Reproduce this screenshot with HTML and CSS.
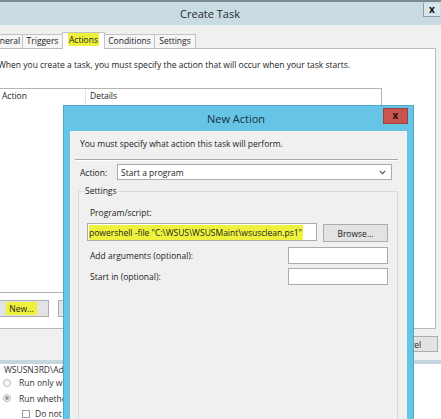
FILE: index.html
```html
<!DOCTYPE html>
<html>
<head>
<meta charset="utf-8">
<title>New Action</title>
<link rel="stylesheet" href="styles.css">
</head>
<body>
<div class="screen">
  <div class="ct">
    <div class="ct-title"><span></span><span class="ct-name">Create Task</span><span class="ct-close">x</span></div>
    <div class="ct-body">
      <div class="tabs">
        <span class="tab t-general">General</span>
        <span class="tab t-triggers">Triggers</span>
        <span class="tab t-actions tab-on"><span class="hl">Actions</span></span>
        <span class="tab t-cond">Conditions</span>
        <span class="tab t-set">Settings</span>
      </div>
      <div class="page">
        <p class="intro">When you create a task, you must specify the action that will occur when your task starts.</p>
        <div class="list">
          <div class="list-head"><span class="col col-action">Action</span><span class="col col-details">Details</span></div>
        </div>
        <div class="list-btns"><span class="btn btn-new"><span class="hl">New...</span></span><span class="btn btn-edit">Edit...</span></div>
      </div>
      <div class="ct-foot"><span class="btn btn-ok">OK</span><span class="btn btn-cancel">Cancel</span></div>
    </div>
  </div>
  <div class="gen">
    <div class="gen-user">WSUSN3RD\Administrator</div>
    <div class="opt"><span class="radio"></span>Run only when user is logged on</div>
    <div class="opt"><span class="radio on"></span>Run whether user is logged on or not</div>
    <div class="opt sub"><span class="check"></span>Do not store password</div>
  </div>

  <div class="dlg">
    <div class="dlg-title"><span></span><span class="dlg-name">New Action</span><span class="dlg-close">x</span></div>
    <div class="dlg-body">
      <p class="dlg-msg">You must specify what action this task will perform.</p>
      <div class="sep"></div>
      <div class="act-row">
        <span class="act-label">Action:</span>
        <div class="select"><span>Start a program</span>
          <svg class="chev" width="7" height="5" viewBox="0 0 7 5"><path d="M0.8 0.8 L3.5 3.6 L6.2 0.8" fill="none" stroke="#505050" stroke-width="1.1"/></svg>
        </div>
      </div>
      <fieldset class="group">
        <legend>Settings</legend>
        <div class="lbl">Program/script:</div>
        <div class="prog-row">
          <div class="input prog"><span class="hl hl-prog">powershell -file "C:\WSUS\WSUSMaint\wsusclean.ps1"</span></div>
          <span class="btn browse">Browse...</span>
        </div>
        <div class="arg-row a1"><span class="arg-label">Add arguments (optional):</span><div class="input small"></div></div>
        <div class="arg-row a2"><span class="arg-label">Start in (optional):</span><div class="input small"></div></div>
      </fieldset>
    </div>
  </div>
</div>
</body>
</html>
```

FILE: styles.css
```css
* { box-sizing: border-box; }
html, body { margin: 0; padding: 0; }
body {
  width: 441px;
  height: 419px;
  overflow: hidden;
  background: #ffffff;
  font-family: "Open Sans", "Noto Sans", sans-serif;
  font-size: 8.5px;
  color: #1c1c1c;
}
p { margin: 0; }
.screen {
  position: relative;
  width: 441px;
  height: 419px;
  overflow: hidden;
}

/* ---------- Create Task window ---------- */
.ct {
  margin-left: -20px;
  width: 461px;
}
.ct-title {
  height: 25px;
  border-top: 2px solid #7d8b94;
  background: #c9dbe3;
  display: grid;
  grid-template-columns: 1fr auto 1fr;
  align-items: center;
  padding-right: 1px;
}
.ct-name {
  font-size: 11px;
  color: #2a2a2a;
}
.ct-close {
  justify-self: end;
  align-self: start;
  margin-top: 1px;
  width: 17px;
  height: 14px;
  border-left: 1px solid #8e9ba3;
  border-bottom: 1px solid #8e9ba3;
  background: #d8e5eb;
  font-weight: bold;
  font-size: 10px;
  line-height: 12px;
  text-align: center;
  color: #111;
}
.ct-body {
  background: #f0f0f0;
  padding: 7px 5px 0 6px;
}
.tabs {
  display: flex;
  align-items: flex-end;
  height: 16px;
}
.tab {
  height: 14px;
  border: 1px solid #c3c3c3;
  border-bottom: none;
  background: #f6f6f6;
  margin-left: -1px;
  text-align: center;
  line-height: 12px;
  white-space: nowrap;
}
.t-general { width: 37px; margin-left: 0; }
.t-triggers { width: 41px; }
.t-actions { width: 43px; }
.t-cond { width: 51px; }
.t-set { width: 42px; }
.tab-on {
  height: 17px;
  background: #ffffff;
  position: relative;
  margin-bottom: -1px;
  line-height: 14px;
  z-index: 1;
}
.hl { background: #eef23c; }
.tab-on .hl { padding: 1px 1px; }

.page {
  height: 281px;
  background: #ffffff;
  border: 1px solid #b9b9b9;
  padding: 0 0 0 7px;
}
.intro {
  margin: 10px 0 0 4px;
  line-height: 12px;
  white-space: nowrap;
}
.list {
  margin-top: 17px;
  width: 388px;
  height: 205px;
  border: 1px solid #b4b4b4;
  background: #fff;
}
.list-head {
  display: flex;
  height: 15px;
  line-height: 14px;
}
.col { padding-left: 7px; }
.col-action { width: 91px; border-right: 1px solid #e3e3e3; }
.col-details { padding-left: 4px; }

.btn {
  display: inline-flex;
  align-items: center;
  justify-content: center;
  background: #e3e3e3;
  border: 1px solid #adadad;
  white-space: nowrap;
}
.list-btns {
  display: flex;
  margin-top: 7px;
}
.btn-new { width: 55px; height: 17px; }
.btn-new .hl { padding: 1px 3px; }
.btn-edit { width: 55px; height: 17px; margin-left: 9px; }

.ct-foot {
  height: 31px;
  display: flex;
  justify-content: flex-end;
  gap: 6px;
  padding-top: 7px;
  margin-right: -2px;
}
.btn-ok, .btn-cancel { width: 60px; height: 16px; }

/* ---------- background General tab fragment ---------- */
.gen {
  border-top: 4px solid #c7d5de;
  background: #ffffff;
  padding-left: 4px;
}
.gen-user {
  line-height: 11px;
  color: #333;
}
.opt {
  display: flex;
  align-items: center;
  height: 15.5px;
  margin-left: -1px;
  color: #333;
}
.opt.sub { margin-left: 18px; }
.radio {
  width: 8px;
  height: 8px;
  border: 1px solid #b5b5b5;
  border-radius: 50%;
  margin-right: 8px;
  background: #fafafa;
  display: inline-flex;
  align-items: center;
  justify-content: center;
}
.radio.on::after {
  content: "";
  width: 4px;
  height: 4px;
  border-radius: 50%;
  background: #9a9a9a;
}
.check {
  width: 8px;
  height: 8px;
  border: 1px solid #9c9c9c;
  background: #fff;
  margin-right: 5px;
}

/* ---------- New Action dialog ---------- */
.dlg {
  position: absolute;
  left: 63px;
  top: 105px;
  width: 351px;
  height: 330px;
  background: #66c4e5;
  border: 1px solid #4ba9cc;
  display: flex;
  flex-direction: column;
}
.dlg-title {
  height: 25px;
  flex: none;
  display: grid;
  grid-template-columns: 1fr auto 1fr;
  align-items: center;
  padding-right: 5px;
}
.dlg-name {
  font-size: 11px;
  color: #1c2f3c;
  margin-top: -1px;
}
.dlg-close {
  justify-self: end;
  align-self: start;
  margin-top: 2px;
  width: 25px;
  height: 16px;
  background: #c85550;
  border: 1px solid #a33e3a;
  color: #2a0e0c;
  font-weight: bold;
  font-size: 10px;
  line-height: 13px;
  text-align: center;
}
.dlg-body {
  flex: 1;
  margin: 0 6px;
  background: #f0f0f0;
}
.dlg-msg {
  margin: 7px 0 0 10px;
  line-height: 12px;
}
.sep {
  margin: 9px 9px 0 5px;
  height: 2px;
  border-top: 1px solid #a8a8a8;
  border-bottom: 1px solid #ffffff;
}
.act-row {
  display: flex;
  align-items: center;
  margin-top: 3px;
  padding-left: 10px;
}
.act-label { width: 37px; }
.select {
  width: 275px;
  height: 16px;
  background: #ffffff;
  border: 1px solid #a9abaf;
  display: flex;
  align-items: center;
  justify-content: space-between;
  padding: 0 5px 0 3px;
}
.group {
  margin: 5px 9px 0 8px;
  padding: 0 9px 0 6px;
  border: 1px solid #dadada;
  height: 240px;
}
.group legend {
  padding: 0;
  line-height: 12px;
}
.lbl {
  margin-top: 10px;
  padding-left: 5px;
  line-height: 12px;
}
.prog-row {
  display: flex;
  align-items: flex-start;
  margin-top: 4px;
}
.input {
  background: #ffffff;
  border: 1px solid #a9abaf;
}
.prog {
  margin-left: 2px;
  width: 230px;
  height: 18px;
  display: flex;
  align-items: center;
  padding-left: 1px;
  white-space: nowrap;
  overflow: hidden;
}
.hl-prog { padding: 2px 1px 2px 0; }
.browse {
  margin-left: auto;
  margin-top: 1px;
  width: 65px;
  height: 18px;
}
.arg-row {
  display: flex;
  align-items: center;
  justify-content: space-between;
  padding-left: 5px;
}
.a1 { margin-top: 5px; }
.a2 { margin-top: 4px; }
.small { width: 100px; height: 17px; }
```
